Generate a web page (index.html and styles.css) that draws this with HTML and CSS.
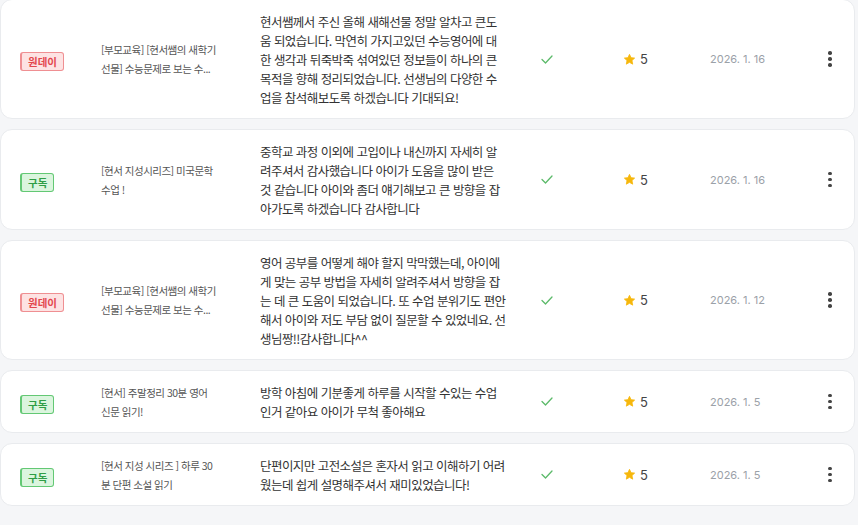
FILE: index.html
```html
<!DOCTYPE html>
<html lang="ko">
<head>
<meta charset="utf-8">
<title>리뷰 목록</title>
<link rel="stylesheet" href="styles.css">
</head>
<body>
<div class="list">
  <div class="card">
    <div class="c-badge"><span class="badge red">원데이</span></div>
    <div class="c-title"><p class="title">[부모교육] [현서쌤의 새학기<br>선물] 수능문제로 보는 수...</p></div>
    <div class="c-review"><p class="review">현서쌤께서 주신 올해 새해선물 정말 알차고 큰도<br>움 되었습니다. 막연히 가지고있던 수능영어에 대<br>한 생각과 뒤죽박죽 섞여있던 정보들이 하나의 큰<br>목적을 향해 정리되었습니다. 선생님의 다양한 수<br>업을 참석해보도록 하겠습니다 기대되요!</p></div>
    <div class="c-check"><svg class="check" viewBox="0 0 12 9"><polyline points="1,4.5 4.5,8 11,1"/></svg></div>
    <div class="c-star"><svg class="star" viewBox="0 0 24 24"><path d="M12 2.5l2.9 6.1 6.6.8-4.9 4.6 1.3 6.6L12 17.3l-5.9 3.3 1.3-6.6-4.9-4.6 6.6-.8z"/></svg><span class="score">5</span></div>
    <div class="c-date">2026. 1. 16</div>
    <div class="c-more"><span class="kebab"><i></i><i></i><i></i></span></div>
  </div>

  <div class="card">
    <div class="c-badge"><span class="badge green">구독</span></div>
    <div class="c-title"><p class="title">[현서 지성시리즈] 미국문학<br>수업 !</p></div>
    <div class="c-review"><p class="review">중학교 과정 이외에 고입이나 내신까지 자세히 알<br>려주셔서 감사했습니다 아이가 도움을 많이 받은<br>것 같습니다 아이와 좀더 얘기해보고 큰 방향을 잡<br>아가도록 하겠습니다 감사합니다</p></div>
    <div class="c-check"><svg class="check" viewBox="0 0 12 9"><polyline points="1,4.5 4.5,8 11,1"/></svg></div>
    <div class="c-star"><svg class="star" viewBox="0 0 24 24"><path d="M12 2.5l2.9 6.1 6.6.8-4.9 4.6 1.3 6.6L12 17.3l-5.9 3.3 1.3-6.6-4.9-4.6 6.6-.8z"/></svg><span class="score">5</span></div>
    <div class="c-date">2026. 1. 16</div>
    <div class="c-more"><span class="kebab"><i></i><i></i><i></i></span></div>
  </div>

  <div class="card">
    <div class="c-badge"><span class="badge red">원데이</span></div>
    <div class="c-title"><p class="title">[부모교육] [현서쌤의 새학기<br>선물] 수능문제로 보는 수...</p></div>
    <div class="c-review"><p class="review">영어 공부를 어떻게 해야 할지 막막했는데, 아이에<br>게 맞는 공부 방법을 자세히 알려주셔서 방향을 잡<br>는 데 큰 도움이 되었습니다. 또 수업 분위기도 편안<br>해서 아이와 저도 부담 없이 질문할 수 있었네요. 선<br>생님짱!!감사합니다^^</p></div>
    <div class="c-check"><svg class="check" viewBox="0 0 12 9"><polyline points="1,4.5 4.5,8 11,1"/></svg></div>
    <div class="c-star"><svg class="star" viewBox="0 0 24 24"><path d="M12 2.5l2.9 6.1 6.6.8-4.9 4.6 1.3 6.6L12 17.3l-5.9 3.3 1.3-6.6-4.9-4.6 6.6-.8z"/></svg><span class="score">5</span></div>
    <div class="c-date">2026. 1. 12</div>
    <div class="c-more"><span class="kebab"><i></i><i></i><i></i></span></div>
  </div>

  <div class="card">
    <div class="c-badge"><span class="badge green">구독</span></div>
    <div class="c-title"><p class="title">[현서] 주말정리 30분 영어<br>신문 읽기!</p></div>
    <div class="c-review"><p class="review">방학 아침에 기분좋게 하루를 시작할 수있는 수업<br>인거 같아요 아이가 무척 좋아해요</p></div>
    <div class="c-check"><svg class="check" viewBox="0 0 12 9"><polyline points="1,4.5 4.5,8 11,1"/></svg></div>
    <div class="c-star"><svg class="star" viewBox="0 0 24 24"><path d="M12 2.5l2.9 6.1 6.6.8-4.9 4.6 1.3 6.6L12 17.3l-5.9 3.3 1.3-6.6-4.9-4.6 6.6-.8z"/></svg><span class="score">5</span></div>
    <div class="c-date">2026. 1. 5</div>
    <div class="c-more"><span class="kebab"><i></i><i></i><i></i></span></div>
  </div>

  <div class="card">
    <div class="c-badge"><span class="badge green">구독</span></div>
    <div class="c-title"><p class="title">[현서 지성 시리즈 ] 하루 30<br>분 단편 소설 읽기</p></div>
    <div class="c-review"><p class="review">단편이지만 고전소설은 혼자서 읽고 이해하기 어려<br>웠는데 쉽게 설명해주셔서 재미있었습니다!</p></div>
    <div class="c-check"><svg class="check" viewBox="0 0 12 9"><polyline points="1,4.5 4.5,8 11,1"/></svg></div>
    <div class="c-star"><svg class="star" viewBox="0 0 24 24"><path d="M12 2.5l2.9 6.1 6.6.8-4.9 4.6 1.3 6.6L12 17.3l-5.9 3.3 1.3-6.6-4.9-4.6 6.6-.8z"/></svg><span class="score">5</span></div>
    <div class="c-date">2026. 1. 5</div>
    <div class="c-more"><span class="kebab"><i></i><i></i><i></i></span></div>
  </div>
</div>
</body>
</html>
```

FILE: styles.css
```css
html, body {
  margin: 0;
  padding: 0;
  background: #f5f6f8;
  font-family: "Noto Sans CJK KR", "Noto Sans", sans-serif;
  color: #333;
}

.list {
  display: flex;
  flex-direction: column;
  gap: 10px;
  margin-top: -1px;
  width: 855px;
}

.card {
  display: grid;
  grid-template-columns: 81px 159px 281px 82px 87px 116px 8px;
  align-items: center;
  padding: 11.5px 22px 11.5px 19px;
  background: #fff;
  border: 1px solid #e9ebee;
  border-radius: 12px;
  box-sizing: border-box;
  width: 855px;
}

.badge {
  display: inline-block;
  font-size: 10.5px;
  font-weight: 700;
  line-height: 15px;
  padding: 1px 6px;
  border-radius: 3px;
  border: 1px solid;
  border-left-width: 2px;
}
.badge.red {
  color: #e3474d;
  background: #fde3e3;
  border-color: #ef8f92;
}
.badge.green {
  color: #2f9e46;
  background: #dbf5de;
  border-color: #63c874;
}

.title {
  margin: 0;
  font-size: 10.5px;
  line-height: 19px;
  letter-spacing: -0.5px;
  color: #555;
  white-space: nowrap;
  overflow: hidden;
}

.review {
  margin: 0;
  font-size: 12.5px;
  line-height: 19px;
  letter-spacing: -0.55px;
  color: #333;
  white-space: nowrap;
}

.check {
  display: block;
  width: 12px;
  height: 9px;
  fill: none;
  stroke: #5cba6a;
  stroke-width: 1.3;
  stroke-linecap: round;
  stroke-linejoin: round;
}

.c-star {
  display: flex;
  align-items: center;
  gap: 4px;
}
.star {
  width: 13px;
  height: 13px;
  fill: #f6b70c;
  stroke: #f6b70c;
  stroke-width: 1.5;
  stroke-linejoin: round;
}
.score {
  font-family: "Inter", "Noto Sans", sans-serif;
  font-size: 13px;
  color: #444;
}

.c-date {
  font-family: "Inter", "Noto Sans", sans-serif;
  font-size: 11px;
  color: #9ba1a8;
}

.kebab {
  display: flex;
  flex-direction: column;
  align-items: center;
  gap: 2.5px;
}
.kebab i {
  display: block;
  width: 3.5px;
  height: 3.5px;
  border-radius: 50%;
  background: #444;
}
```
